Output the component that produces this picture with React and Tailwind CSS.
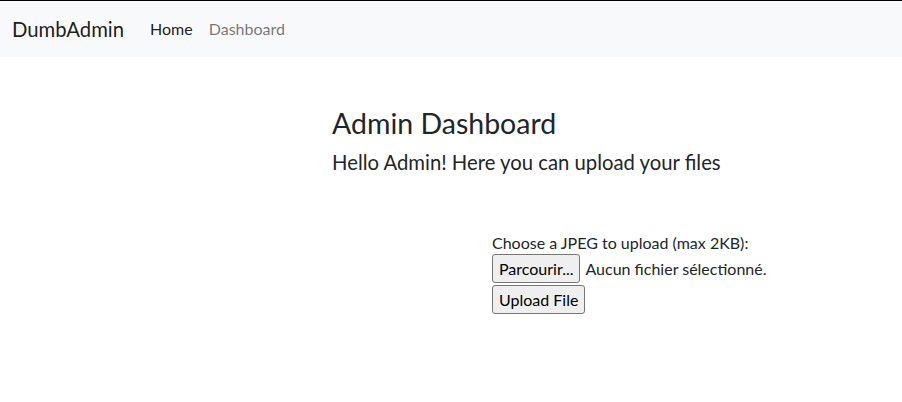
export default function App() {
  const font = { fontFamily: 'Lato, "Noto Sans", sans-serif' };
  return (
    <div className="min-h-[402px] w-full border-t border-black bg-white text-[#212529]" style={font}>
      <nav className="flex h-[56px] items-center bg-[#f8f9fa] px-[12px]">
        <span className="mr-[18px] text-[20.3px] leading-[30px] text-black/90">DumbAdmin</span>
        <a className="px-[8px] text-[16px] leading-[24px] text-black/90">Home</a>
        <a className="px-[8px] text-[16px] leading-[24px] text-black/55">Dashboard</a>
      </nav>
      <main className="pl-[332px] pt-[49px]">
        <h1 className="text-[28.5px] leading-[35px] font-normal">Admin Dashboard</h1>
        <h2 className="mt-[9px] text-[20.3px] leading-[24px] font-normal">Hello Admin! Here you can upload your files</h2>
        <form className="ml-[160px] mt-[59px] flex flex-col items-start text-[16px] leading-[20px]">
          <label className="block">Choose a JPEG to upload (max 2KB):</label>
          <div className="mt-[1px] flex items-center gap-[5px]">
            <span className="flex h-[29px] items-center rounded-[3px] border border-[#767676] bg-[#efefef] px-[6px] text-black">Parcourir...</span>
            <span>Aucun fichier sélectionné.</span>
          </div>
          <span className="mt-[2px] flex h-[29px] items-center rounded-[3px] border border-[#767676] bg-[#efefef] px-[6px] text-black">Upload File</span>
        </form>
      </main>
    </div>
  );
}
